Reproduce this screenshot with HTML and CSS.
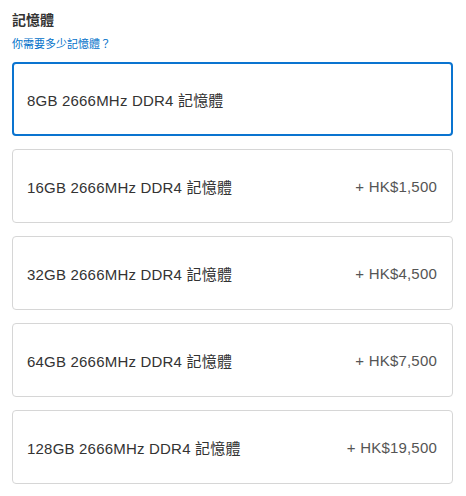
FILE: index.html
```html
<!DOCTYPE html>
<html lang="zh-Hant">
<head>
    <meta charset="UTF-8">
    <meta name="viewport" content="width=device-width, initial-scale=1.0">
    <title>記憶體</title>
    <link rel="stylesheet" href="styles.css">
</head>
<body>
    <h2 class="title">記憶體</h2>
    <a class="help" href="#">你需要多少記憶體？</a>
    <div class="options">
        <label class="option selected">
            <span class="name">8GB 2666MHz DDR4 記憶體</span>
        </label>
        <label class="option">
            <span class="name">16GB 2666MHz DDR4 記憶體</span>
            <span class="price">+ HK$1,500</span>
        </label>
        <label class="option">
            <span class="name">32GB 2666MHz DDR4 記憶體</span>
            <span class="price">+ HK$4,500</span>
        </label>
        <label class="option">
            <span class="name">64GB 2666MHz DDR4 記憶體</span>
            <span class="price">+ HK$7,500</span>
        </label>
        <label class="option">
            <span class="name">128GB 2666MHz DDR4 記憶體</span>
            <span class="price">+ HK$19,500</span>
        </label>
    </div>
</body>
</html>
```

FILE: styles.css
```css
body { font-family: "Liberation Sans", "Noto Sans CJK TC", sans-serif; margin: 0; padding: 10px 13px 0 12px; color: #333; }
.title { font-size: 14px; font-weight: 600; line-height: 20px; margin: 0; color: #333; }
.help { display: block; font-size: 11px; line-height: 16px; margin-top: 6px; color: #0070c9; text-decoration: none; }
.options { display: flex; flex-direction: column; gap: 13px; margin-top: 10px; }
.option { display: flex; align-items: center; justify-content: space-between; box-sizing: border-box; height: 74px; padding: 0 15px 0 14px; border: 1px solid #d6d6d6; border-radius: 4px; font-size: 15px; letter-spacing: 0.2px; cursor: pointer; }
.option.selected { border: 2px solid #0a74d0; padding: 0 14px 0 13px; }
.name { color: #333; }
.price { color: #555; }
```
